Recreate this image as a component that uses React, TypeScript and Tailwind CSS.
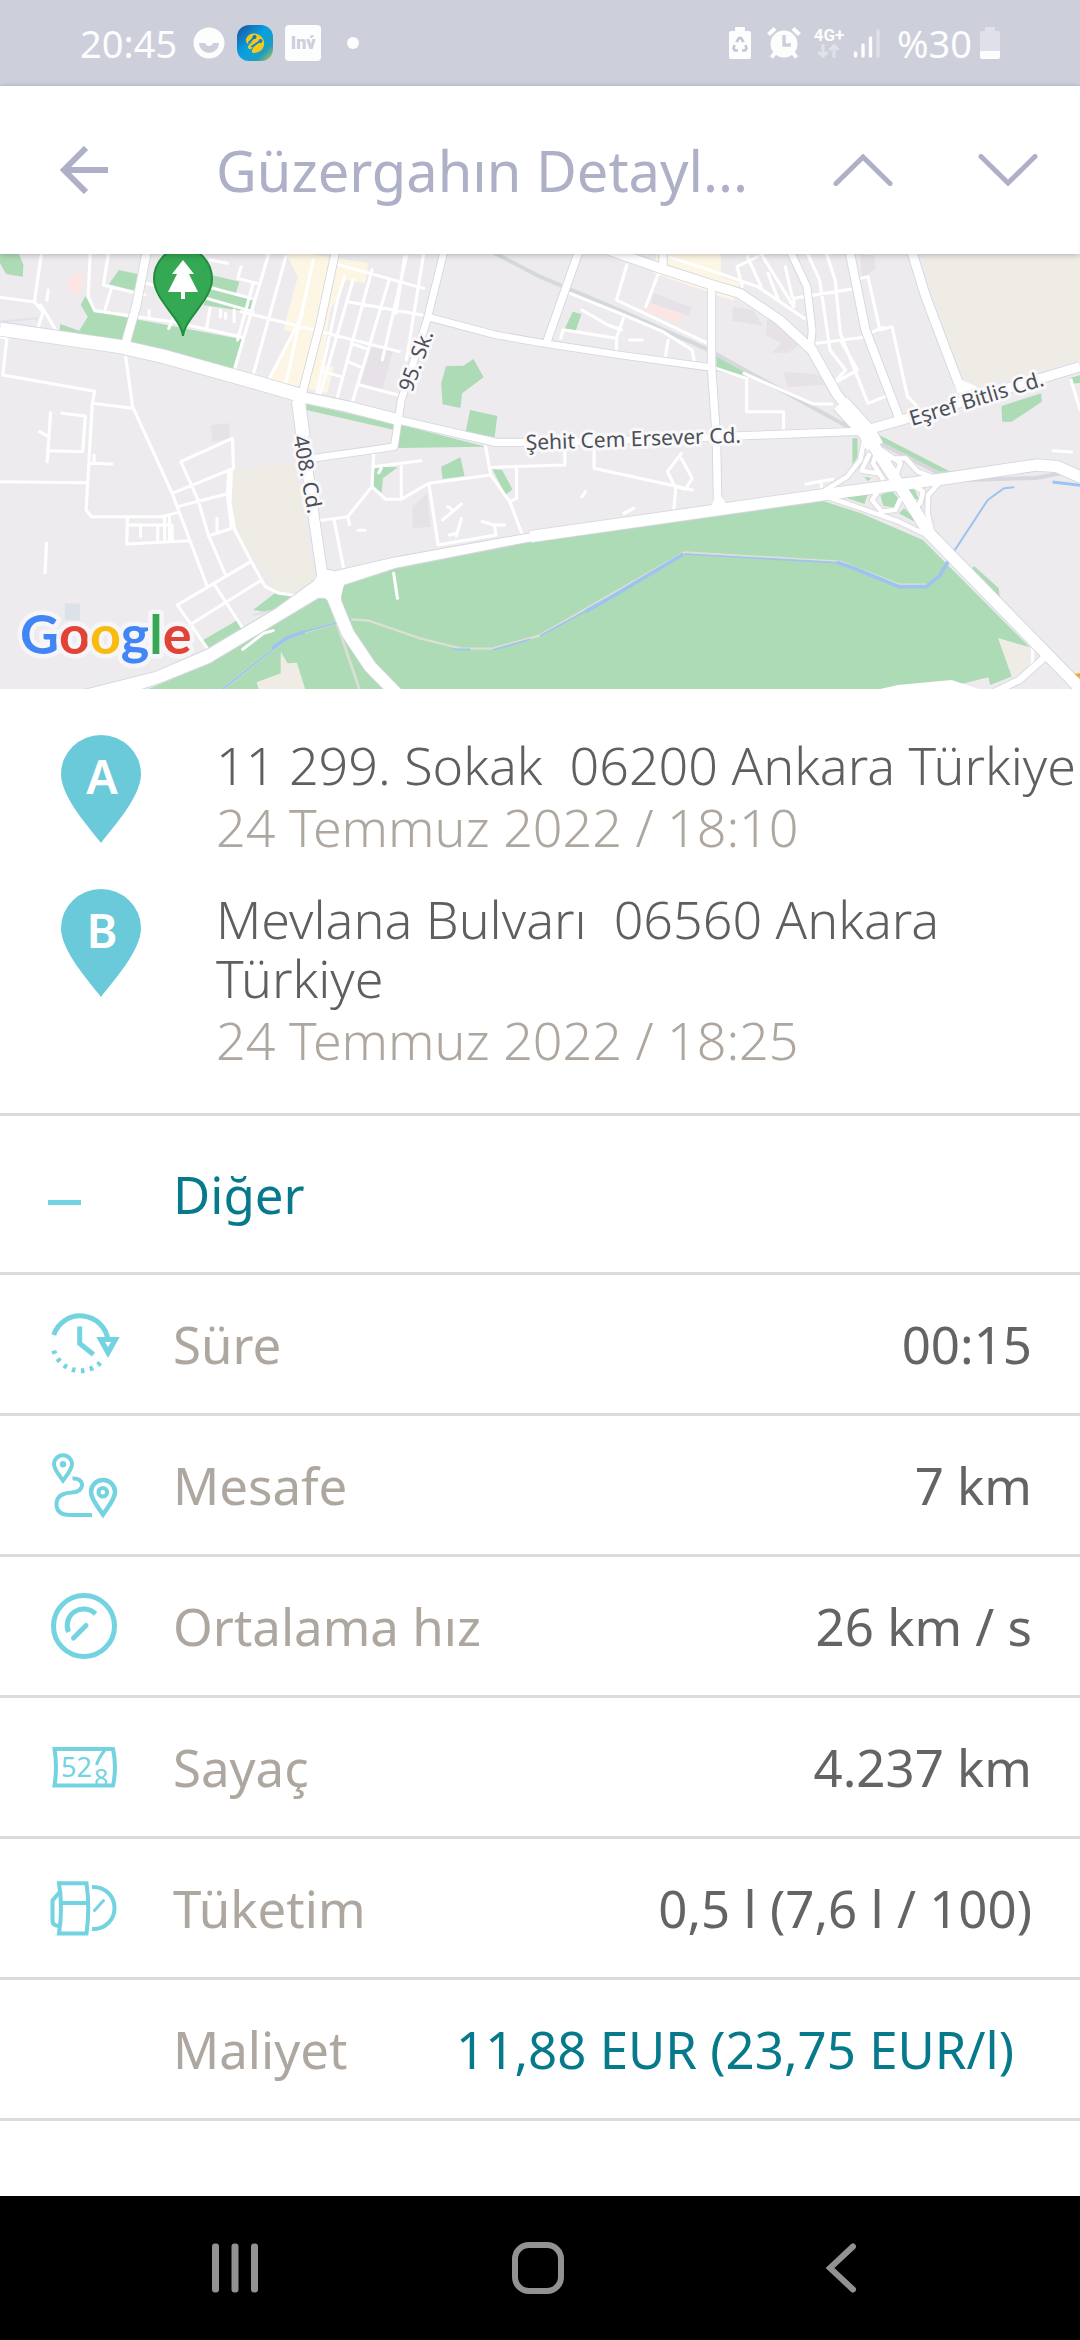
import type { ReactNode } from "react";

/* ---------- status bar ---------- */

function StatusBar() {
  return (
    <div className="flex h-[86px] shrink-0 items-center bg-[#cdcfdb] pl-20 pr-20 text-[38px] leading-none text-[#fcfdfd]">
      <span>20:45</span>
      <div className="ml-4 flex items-center gap-3">
        <svg className="h-8 w-8" viewBox="0 0 32 32" aria-hidden="true">
          <circle cx="16" cy="16" r="15.500" fill="#fcfdfd" />
          <path d="M6 16H12A4.200 4.200 0 0 0 20 16H26A10 10 0 0 1 6 16z" fill="#cdcfdb" />
        </svg>
        <svg className="h-9 w-9" viewBox="0 0 36 36" aria-hidden="true">
          <defs>
            <linearGradient id="app-tile" x1="0" y1="0" x2="1" y2="1">
              <stop offset="0" stopColor="#1d4f9c" />
              <stop offset="0.45" stopColor="#06a0e0" />
              <stop offset="0.75" stopColor="#1d9ec2" />
              <stop offset="1" stopColor="#c9c33a" />
            </linearGradient>
          </defs>
          <rect width="36" height="36" rx="12" fill="url(#app-tile)" />
          <path d="M9 14C11 9 16 7.500 20 9C25 11 28 15 27 20C26 25 22 28 16 28C14 27 15 24 17 22L20 19L14 24C11 25 10 22 12 20L16 16L11 19C9 18 9 16 9 14z" fill="#f6c81e" />
          <path d="M12 17.500L17.500 12M15 21.500L24 15.500" stroke="#0b84c9" strokeWidth="1.800" strokeLinecap="round" />
          <circle cx="17.500" cy="12" r="2" fill="#0b74bd" />
          <circle cx="23.500" cy="16" r="2" fill="#0b84c9" />
        </svg>
        <div className="flex h-9 w-9 items-center justify-center rounded bg-[#fcfdfd] font-[Roboto,sans-serif] text-[18px] font-black text-[#cdcfdb]">
          Inv́
        </div>
      </div>
      <span className="ml-[26px] h-3 w-3 rounded-full bg-[#fcfdfd]" />
      <div className="ml-auto flex items-center">
        <svg className="h-8 w-[22px]" viewBox="0 0 22 32" aria-hidden="true">
          <path d="M6 0H16V4H20Q22 4 22 6V30Q22 32 20 32H2Q0 32 0 30V6Q0 4 2 4H6z" fill="#fcfdfd" />
          <g fill="none" stroke="#c3c6d6" strokeWidth="2.600">
            <path d="M7.500 15L10 11H12L14.500 15" />
            <path d="M5.500 18L4.500 21.500L6 23.500H9" />
            <path d="M16.500 18L17.500 21.500L16 23.500H13" />
          </g>
        </svg>
        <svg className="ml-4 h-8 w-[34px]" viewBox="0 0 34 32" aria-hidden="true">
          <circle cx="17" cy="17" r="13.500" fill="#fcfdfd" />
          <path d="M1.500 7.500L8 1.500M26 1.500L32.500 7.500M8 26L4.500 30.500M26 26L29.500 30.500" stroke="#fcfdfd" strokeWidth="4" />
          <path d="M17 8V18H24" fill="none" stroke="#cdcfdb" strokeWidth="3.500" />
        </svg>
        <div className="ml-3 flex w-8 flex-col items-center">
          <span className="font-[Roboto,sans-serif] text-[17px] font-bold leading-4">4G+</span>
          <svg className="h-4 w-6" viewBox="0 0 24 16" fill="none" stroke="#e0e2ea" strokeWidth="3" aria-hidden="true">
            <path d="M6 1V13M1.500 9L6 13.500L10.500 9M17 15V3M12.500 7L17 2.500L21.500 7" />
          </svg>
        </div>
        <svg className="ml-2 h-8 w-7" viewBox="0 0 28 32" strokeWidth="3.400" strokeLinecap="round" aria-hidden="true">
          <path d="M2.500 26V29M10 18V29M17.500 11V29" stroke="#fcfdfd" />
          <path d="M25 4V29" stroke="#dfe0e9" />
        </svg>
        <span className="ml-4">%30</span>
        <svg className="ml-2 h-8 w-5" viewBox="0 0 20 32" aria-hidden="true">
          <path d="M5 0H15V4H18Q20 4 20 6V25H0V6Q0 4 2 4H5z" fill="#dfe0e9" />
          <path d="M0 24H20V30Q20 32 18 32H2Q0 32 0 30z" fill="#fcfdfd" />
        </svg>
      </div>
    </div>
  );
}

/* ---------- title bar ---------- */

function TitleBar() {
  return (
    <header className="relative z-10 flex h-[168px] shrink-0 items-center bg-white pl-14 pr-9 text-[#adb0c6] shadow-[0_1px_6px_rgba(0,0,0,0.25)]">
      <button type="button" aria-label="Geri" className="flex h-14 w-14 items-center justify-center">
        <svg className="h-12 w-12" viewBox="0 0 48 48" fill="none" stroke="currentColor" strokeWidth="6">
          <path d="M48 24H6M26 2L4 24L26 46" />
        </svg>
      </button>
      <h1 className="ml-[104px] flex-1 truncate text-[56px] leading-[80px]">Güzergahın Detayl...</h1>
      <button type="button" aria-label="Önceki güzergah" className="flex h-14 w-[72px] items-center justify-center">
        <svg className="h-8 w-[60px]" viewBox="0 0 60 32" fill="none" stroke="currentColor" strokeWidth="5" strokeLinecap="round">
          <path d="M3 29.500L30 3L57 29.500" />
        </svg>
      </button>
      <button type="button" aria-label="Sonraki güzergah" className="ml-[73px] flex h-14 w-[72px] items-center justify-center">
        <svg className="h-8 w-[60px]" viewBox="0 0 60 32" fill="none" stroke="currentColor" strokeWidth="5" strokeLinecap="round">
          <path d="M3 2.500L30 29L57 2.500" />
        </svg>
      </button>
    </header>
  );
}

/* ---------- map ---------- */

const GREEN = [
  "M0 12H55L68 45L66 80L18 72L0 40z",
  "M248 138L272 182L380 205L702 268L678 362L520 320L350 275L173 245L175 222L230 242L255 200L234 165z",
  "M345 60L402 73L390 122L316 103z",
  "M615 75L695 95L685 130L610 112z",
  "M612 118L733 150L725 186L590 165z",
  "M890 462L1145 522V540L890 480z",
  "M1165 525L1412 590L1155 594z",
  "M1295 348L1345 347L1375 327L1404 382L1342 430L1337 474L1285 463L1281 400z",
  "M1365 480L1444 498L1436 562L1352 545z",
  "M1281 650L1337 622L1349 678L1285 687z",
  "M1085 650L1155 652L1112 685L1108 728L1085 710z",
  "M1430 658L1458 660L1488 718L1468 735z",
  "M400 1330L610 1240L930 1040L1000 1005L1150 955L1568 868L2388 752L2500 790L2680 870L2990 1192L2900 1165L2938 1280L2875 1305L2870 1282L2800 1300L2540 1330z",
  "M735 1080L800 1028L850 1035L790 1090z",
  "M590 1170L690 1110L712 1140L610 1198z",
  "M2080 318L2168 365V385L2080 362z",
  "M1663 185L1688 192L1670 248L1638 240z",
  "M2475 565H2490V620L2475 645z",
  "M2553 555L2760 665H2718L2540 575z",
  "M2908 468L3023 430L3025 455L2938 515H2910z",
  "M3106 385L3136 375V398L3113 402z",
  "M2818 962L2828 948L2900 1015L2903 1045z",
];
const BEIGE = [
  "M670 655L855 640L915 985L850 1032L800 1020L680 835z",
  "M2668 0H3136V335L2838 410L2788 375z",
  "M2898 1165L2990 1195L2988 1250L2938 1280z",
  "M815 1205L835 1240L862 1238L890 1330H755L745 1297L815 1270z",
];
const YELLOW = [
  "M825 0L1070 40L1060 100L1005 90L960 180L935 345L970 350L950 430L785 390L850 245L822 240L865 80z",
  "M1908 0H2093V80L2148 100L2130 152L1898 70z",
];
const PINK = ["M242 62L230 135L200 125V85z", "M1883 160L1983 195L1968 222L1878 182z"];
const GREY = [
  "M1080 290L1140 305L1110 420L1045 405z",
  "M612 525L665 520L667 565L617 577z",
  "M1197 770L1240 730L1250 830L1198 835z",
  "M1898 130L2008 172L2000 198L1890 160z",
  "M2128 170L2188 180L2213 228L2126 212z",
  "M2228 210H2278L2328 280L2288 308H2240L2268 280L2223 255z",
  "M2276 366L2368 372L2420 402L2286 412z",
  "M2498 15H2538L2543 55L2503 90z",
];
const MINOR = [
  "M0 142L100 156L120 12M100 156L125 185L110 235M118 165L165 245M262 12L256 140L275 182L500 215L705 262",
  "M315 12L300 105L420 135M325 110L305 178M425 100L600 145L735 185M610 30L660 40M690 85L745 100M700 50L690 85M610 112L730 145",
  "M0 260L20 265L8 375L275 424M8 375L20 265M275 424L268 460L385 475M268 460L250 780L265 800L470 800L515 788M0 695L250 698M260 640L325 642M273 615V638",
  "M365 320L385 470L500 730L600 1005M147 488L137 635M180 490L248 498L240 605L140 602M115 545L138 558M135 880L131 968",
  "M370 805L368 882L548 872M372 825H500V870M408 830V860M458 825V870M478 800V868M492 800V868",
  "M525 635L675 565L678 655L500 730M525 635L575 750L605 855L655 975M515 770L658 732M665 660L660 730L672 835L605 858M630 805V840",
  "M672 660L668 760L682 840L730 935L770 1010L810 1030L850 1035M728 935L515 1065L605 1200M760 990L555 1122M620 1000L705 1135",
  "M780 12L680 360M830 20L735 375M880 190L780 390M910 30L830 400M700 185L1160 305M735 100L690 270",
  "M970 40L1230 115M1000 80L980 150L920 430M1025 90L930 430M1080 60L980 440M1130 90L1025 450M1180 20L1110 330M1230 12L1180 330M1010 155L1225 195M940 365L990 380M1045 405L1155 435M1020 280L1060 295M1010 335L1045 350M1175 20L1150 190",
  "M505 200L490 235M610 175L600 235M640 180V200M655 190V205M680 180V215M433 182V205M140 120L136 150",
  "M1085 615L1080 710L1120 748H1165L1245 700L1425 675L1410 590M1085 650L1222 632M1165 650V745M1080 710L1010 800L925 812M970 810L997 950M1010 800L1015 825M1040 841H1060M1107 655L1100 668",
  "M1245 700L1272 885L1440 855L1435 825L1400 815M1435 825H1465M1425 675L1480 755L1515 850M1430 652L1640 645V600M1500 655V745L1480 755M1340 762L1318 782L1300 770M1318 782L1285 810M1340 805L1325 858M1305 855L1325 850",
  "M1143 970L1154 1045M705 1198L765 1150L793 1142",
  "M1655 130L1800 190L1925 245L2010 300L2015 330M1820 45L1790 150L2055 280M1910 75L1875 170M1690 180L1765 225L1805 240M1640 240L1790 265V300M1810 205L1790 265M1635 240L1628 265M1828 270H1865M1940 270L1932 320",
  "M2080 355L2168 385V485H2275V535M2160 370L2360 462H2415M1725 600V655L1990 715L2010 720M1978 610L1938 665L1960 710L1990 718L2010 685L1978 625M1962 715L1957 775M1700 725L1690 740M1840 775L1812 790M2340 702L2418 688M2385 695V720",
  "M1940 20L2060 60L2200 110L2335 205M2140 50L2200 20M2140 50L2155 110M2170 20L2210 110M2230 70L2260 150M2210 12L2305 170V145L2470 118M2300 140L2280 50M2345 12L2380 90L2410 300L2455 360L2420 400M2400 12L2425 90L2440 250L2520 460L2570 440M2370 280L2510 262M2440 270L2490 360L2430 395",
  "M2520 80L2555 240L2590 230L2635 440L2660 465M2500 85L2520 80M2535 245L2565 232M3058 602L3112 606M3110 390L3136 480M2998 1190V1240L2960 1290",
];
/* path data and road width */
const MAJOR: [string, number][] = [
  ["M0 237L350 290L470 318L730 393L885 440", 40],
  ["M870 440L1010 470L1160 510", 32],
  ["M1150 508L1440 577H1568L2000 565L2140 558L2470 545H2530", 22],
  ["M868 440L880 560L908 780L938 990", 30],
  ["M866 450L880 560", 38],
  ["M975 0L930 220L875 440", 22],
  ["M427 0L395 170L362 290", 24],
  ["M1290 0L1240 210L1165 450L1145 590L1080 600L860 632", 20],
  ["M1250 203L1440 255L1568 278L1800 315L2060 352", 20],
  ["M1682 0L1588 275", 22],
  ["M1768 0L1918 55L2068 105L2148 130L2263 210L2358 300L2428 430L2508 540", 28],
  ["M1925 0V55", 22],
  ["M2066 110V350L2080 560L2084 775", 22],
  ["M2293 0L2343 110L2358 240L2353 300", 20],
  ["M2466 0L2513 240L2613 510", 24],
  ["M2646 0L2688 140L2783 400", 26],
  ["M2500 545L2618 510L3136 350", 28],
  ["M2440 460L2520 550L2540 590", 52],
  ["M2520 560L2608 700L2698 850L3160 1340", 34],
  ["M950 1000L1010 1150L1075 1250L1160 1340", 36],
  ["M1540 860L2388 735L2750 685L3010 645L3070 650L3140 682", 34],
  ["M3030 1225L2960 1290L2880 1330", 20],
];
/* green plots enclosed by the interchange loops */
const LOOPS = "M2440 738L2520 732L2510 762zM2556 735L2590 722L2608 745L2595 772L2565 768zM2618 720L2655 718L2668 748L2640 745zM2610 790L2625 775L2665 815L2650 812zM2510 680L2530 684L2520 694z";
const RAMPS =
  "M2508 575L2498 630L2460 680L2390 725M2525 610L2500 665M2550 590L2535 640L2565 690M2560 600L2615 640L2600 680M2580 625H2630L2665 665L2730 690M2400 740L2500 775L2610 815L2700 860M2735 690L2695 735L2693 790L2710 860M2556 715L2532 750L2560 785L2600 780L2615 745M2650 705L2680 725L2672 760L2650 775M2500 662L2550 670";

const RIVER_BANK =
  "M640 1322L830 1168L890 1145L1020 1108L1070 1112L1220 1165L1340 1196H1430L1568 1156L1988 907L2440 935L2610 1004H2690";

function RouteMap() {
  return (
    <section aria-label="Harita" className="h-[435px] w-full shrink-0 overflow-hidden bg-[#eeebef]">
      <svg className="h-full w-full" viewBox="0 0 1080 435" preserveAspectRatio="xMidYMid slice">
        <g transform="translate(0 -4) scale(0.3444 0.3333)" strokeLinejoin="round" fill="none">
          <path d={BEIGE.slice(0, 2).join("")} fill="#efece6" />
          <path d={YELLOW.join("")} fill="#fef6e4" />
          <path d={PINK.join("")} fill="#fde5e4" />
          <path d={GREY.join("")} fill="#e6e2e7" />
          <path d="M188 1058L232 1062V1112L188 1110z" fill="#dce3e8" />
          <path d={GREEN.join("")} fill="#addbb6" />
          <path d={BEIGE.slice(2).join("")} fill="#efece6" />
          <path d="M1400 -10L1568 80L1808 185L2048 295L2268 420L2453 525L2730 672M2730 692L3008 684L3080 670" stroke="#d5d9dd" strokeWidth="12" />
          <path d="M0 215L110 205M735 1095L800 1080" stroke="#dde3e6" strokeWidth="6" />
          <path d={RIVER_BANK} stroke="#dcdfd4" strokeWidth="7" />
          <path d="M965 1080L1045 1322" stroke="#dcdfd4" strokeWidth="8" />
          <path d="M640 1322L830 1168M885 1145L1020 1108M1315 1198H1365M1430 1200L1540 1168M1568 1158L1780 1038M1988 912L2430 938" stroke="#9dc3f0" strokeWidth="5" />
          <path d="M790 1195L830 1166L885 1145M1700 1085L1780 1038L1985 912M2430 937L2480 955L2610 1010H2690L2728 978L2770 905" stroke="#9dc3f0" strokeWidth="11" />
          <path d="M2765 912L2868 750L2915 715L2945 712" stroke="#9dc3f0" strokeWidth="6" />
          <path d="M3056 696L3136 706" stroke="#9dc3f0" strokeWidth="9" />
          <path d={MINOR.join("")} stroke="#ffffff" strokeWidth="9" strokeLinecap="round" />
          {MAJOR.map(([d, w]) => (
            <path key={d} d={d} stroke="#d3d6df" strokeWidth={w + 5} />
          ))}
          <path d={RAMPS} stroke="#dfdce2" strokeWidth="20" />
          <path d={LOOPS} fill="#addbb6" />
          <path d="M230 1322L450 1265L600 1198L800 1075L920 985L950 958L975 962L1150 920L1568 843V870L1150 955L992 1008L990 1060L960 1045H925L610 1240L470 1298L390 1326z" fill="#fff" stroke="#d3d6df" strokeWidth="3" />
          <path d={RAMPS} stroke="#ffffff" strokeWidth="13" />
          {MAJOR.map(([d, w]) => (
            <path key={d} d={d} stroke="#ffffff" strokeWidth={w} />
          ))}
          <path d="M935 960L1000 1000L985 1060L950 1050L900 1010zM2500 1330L2608 1305L2763 1290L2850 1320V1330zM2066 770L2075 740H2095L2112 768zM2770 380L2840 412L2780 430z" fill="#fff" />
          <path d="M3120 1272L3136 1270V1285z" fill="#f5a623" />
        </g>

        <g>
          <path d="M183 82C181 64 154 46 154 25A29 31 0 0 1 212 25C212 46 185 64 183 82z" fill="#34a853" stroke="#1f8e3e" strokeWidth="2" />
          <path d="M183 6L194 20H189L198 38H185V45H181V38H168L177 20H172z" fill="#fff" />
        </g>

        <g
          className="font-[Noto_Sans,sans-serif]"
          fill="#4c4f56"
          stroke="#f9f8fa"
          strokeWidth="6"
          strokeLinejoin="round"
          paintOrder="stroke"
          fontSize="21"
        >
          <text transform="translate(412 139) rotate(-70)">95. Sk.</text>
          <text transform="translate(293 183) rotate(79)">408. Cd.</text>
          <text transform="translate(526 196) rotate(-2)">Şehit Cem Ersever Cd.</text>
          <text transform="translate(912 172) rotate(-17)">Eşref Bitlis Cd.</text>
        </g>

        <text
          x="20"
          y="400"
          fontFamily="Lato, sans-serif"
          fontWeight="700"
          fontSize="54"
          stroke="#f6f5f8"
          strokeWidth="9"
          strokeLinejoin="round"
          paintOrder="stroke"
        >
          <tspan fill="#4285f4">G</tspan>
          <tspan fill="#e14436">o</tspan>
          <tspan fill="#f9bb10">o</tspan>
          <tspan fill="#4285f4">g</tspan>
          <tspan fill="#34a853">l</tspan>
          <tspan fill="#e14436">e</tspan>
        </text>
      </svg>
    </section>
  );
}

/* ---------- stops ---------- */

function Stop({ letter, address, time }: { letter: string; address: string; time: string }) {
  return (
    <li className="flex items-start">
      <svg className="ml-[61px] mr-[75px] h-[108px] w-20 shrink-0" viewBox="0 0 80 108" aria-hidden="true">
        <path d="M40 108C28 92 0 62 0 39A40 39 0 0 1 80 39C80 62 52 92 40 108z" fill="#6bcada" />
        <text x="41" y="59" textAnchor="middle" fill="#fff" fontSize="47" className="font-semibold">
          {letter}
        </text>
      </svg>
      <div className="min-w-0 flex-1 text-[52px] font-light leading-[59px]">
        <p className="text-[#5f5f60]">{address}</p>
        <p className="mt-[3px] text-[#aea79f]">{time}</p>
      </div>
    </li>
  );
}

/* ---------- detail rows ---------- */

function RowIcon({ children }: { children?: ReactNode }) {
  return (
    <svg className="h-[72px] w-[72px] shrink-0" viewBox="0 0 72 72" fill="none" stroke="#74d3e1" strokeWidth="4" aria-hidden="true">
      {children}
    </svg>
  );
}

const clock = (
  <>
    <path d="M5.700 27A28 28 0 0 1 60 32" strokeWidth="5" />
    <path d="M31.700 18.500V35.500L45.500 46.500" strokeWidth="5" />
    <path d="M48.300 29H71.700L60 50zM57 34L60 39L63 34z" fill="#74d3e1" fillRule="evenodd" stroke="none" />
    <path d="M5.850 42.650A28 28 0 0 0 52.500 54.500" strokeWidth="5" strokeDasharray="3.500 5.500" />
  </>
);
const distance = (
  <>
    <path d="M15 31.500C11 26 6 20.500 6 15.300A9 9 0 0 1 24 15.300C24 20.500 19 26 15 31.500z" />
    <circle cx="15" cy="15.300" r="3.200" fill="#74d3e1" stroke="none" />
    <path d="M55 65.500C50 58 43 50 43 43A12 12 0 0 1 67 43C67 50 60 58 55 65.500z" strokeWidth="4.500" />
    <circle cx="54.800" cy="43.300" r="4.300" />
    <path d="M24.500 29.500C30 29 34.500 32 34 36.500C33.500 41 30 43 24 43.500C14 44 8.500 48 8.500 55C8.500 62 13 66 22 66H44" />
  </>
);
const gauge = (
  <>
    <circle cx="36" cy="36" r="30.500" strokeWidth="5" />
    <path d="M20.500 42A16.500 16.500 0 0 1 47.500 24" strokeWidth="5" />
    <path d="M25.500 48L38 35.500" strokeWidth="5" strokeLinecap="round" />
  </>
);
const odometer = (
  <>
    <path d="M6.500 18H65Q69 36 65 54.500H6.500Q9.500 36 6.500 18z" />
    <g fill="#74d3e1" stroke="none" fontSize="27">
      <text x="13" y="46">52</text>
      <text x="46" y="56" fontSize="25">8</text>
    </g>
    <path d="M57 19C53 24 50 29 48.500 34" strokeWidth="3" />
  </>
);
const fuel = (
  <>
    <path d="M11 11.300H38.500Q42 36 38.500 61.500H11Q15 36 11 11.300zM13 31H40" />
    <path d="M13 18.500L4.500 28.500V49Q4.500 54 12 54" />
    <path d="M44 15C57 14.500 66.500 24 66.500 36S57 57.500 44 57" />
    <path d="M46.500 38.500L55.500 28.500" strokeWidth="3" strokeLinecap="round" />
  </>
);

const ROWS = [
  { label: "Süre", value: "00:15", icon: clock },
  { label: "Mesafe", value: "7 km", icon: distance },
  { label: "Ortalama hız", value: "26 km / s", icon: gauge },
  { label: "Sayaç", value: "4.237 km", icon: odometer },
  { label: "Tüketim", value: "0,5 l (7,6 l / 100)", icon: fuel },
];

function Details() {
  return (
    <section className="text-[51px] leading-[60px]">
      <button type="button" aria-expanded="true" className="flex h-[159px] w-full items-center border-b-[3px] border-[#dddbd8] pl-12 text-left text-[#067a8b]">
        <span className="flex h-[72px] w-[72px] flex-col justify-center pt-4">
          <span className="h-[5px] w-[33px] bg-[#74d3e1]" />
        </span>
        <span className="ml-[53px]">Diğer</span>
      </button>
      <dl>
        {ROWS.map((row) => (
          <div key={row.label} className="flex h-[141px] items-center border-b-[3px] border-[#dddbd8] pl-12 pr-12">
            <RowIcon>{row.icon}</RowIcon>
            <dt className="ml-[53px] text-[#aea79f]">{row.label}</dt>
            <dd className="ml-auto text-[#646465]">{row.value}</dd>
          </div>
        ))}
        <div className="flex h-[141px] items-center border-b-[3px] border-[#dddbd8] pl-12 pr-12">
          <dt className="ml-[125px] text-[#aea79f]">Maliyet</dt>
          <dd className="ml-auto text-[#067a8b]">
            <button type="button" className="px-[18px]">11,88 EUR (23,75 EUR/l)</button>
          </dd>
        </div>
      </dl>
    </section>
  );
}

/* ---------- system navigation ---------- */

function SystemNav() {
  return (
    <nav className="grid h-36 shrink-0 grid-cols-3 items-center bg-black pl-[84px] pr-[88px] text-[#929292]">
      <button type="button" aria-label="Son uygulamalar" className="flex justify-center">
        <svg className="h-[52px] w-[52px]" viewBox="0 0 52 52" fill="currentColor">
          <rect x="3" y="1.500" width="7" height="49" rx="3" />
          <rect x="22.500" y="1.500" width="7" height="49" rx="3" />
          <rect x="42" y="1.500" width="7" height="49" rx="3" />
        </svg>
      </button>
      <button type="button" aria-label="Ana ekran" className="flex justify-center">
        <svg className="h-[52px] w-[52px]" viewBox="0 0 52 52" fill="none" stroke="currentColor" strokeWidth="6">
          <rect x="3" y="3" width="46" height="46" rx="14" />
        </svg>
      </button>
      <button type="button" aria-label="Geri" className="flex justify-center">
        <svg className="h-[52px] w-[52px]" viewBox="0 0 52 52" fill="none" stroke="currentColor" strokeWidth="6" strokeLinecap="round">
          <path d="M38 4.500L15 26L38 47.500" />
        </svg>
      </button>
    </nav>
  );
}

export default function App() {
  return (
    <div className="flex min-h-screen flex-col bg-white font-['Noto_Sans',sans-serif]">
      <StatusBar />
      <TitleBar />
      <main className="flex-1">
        <RouteMap />
        <ul className="flex flex-col gap-[33px] border-b-[3px] border-[#dddbd8] pb-11 pt-[46px]">
          <Stop letter="A" address={"11 299. Sokak\u00a0 06200 Ankara Türkiye"} time="24 Temmuz 2022 / 18:10" />
          <Stop letter="B" address={"Mevlana Bulvarı\u00a0 06560 Ankara Türkiye"} time="24 Temmuz 2022 / 18:25" />
        </ul>
        <Details />
      </main>
      <SystemNav />
    </div>
  );
}
